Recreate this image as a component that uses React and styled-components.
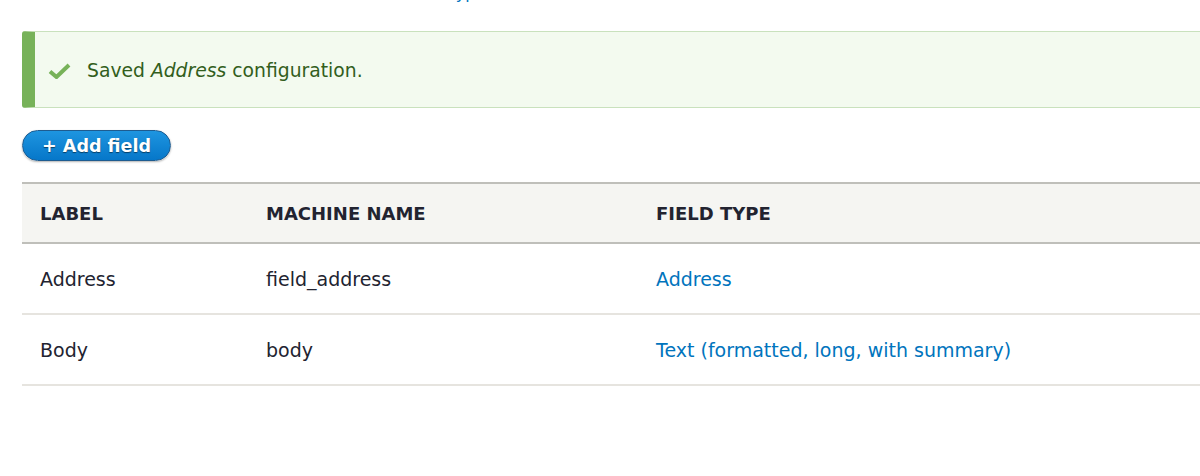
import React from 'react';
import styled, { createGlobalStyle } from 'styled-components';

const GlobalStyle = createGlobalStyle`
  html, body {
    margin: 0;
    padding: 0;
    background: #fff;
    overflow: hidden;
  }
  body {
    font-family: "DejaVu Sans", "Liberation Sans", sans-serif;
    color: #222330;
  }
`;

const Page = styled.div`
  padding-left: 22px;
  margin-right: -40px;
  padding-top: 1px;
`;

const Breadcrumb = styled.div`
  margin-top: -17px;
  height: 20px;
  font-size: 16px;
  line-height: 20px;
  color: #8a8a8a;
  white-space: nowrap;
  padding-left: 60px;

  a {
    color: #0074bd;
    text-decoration: none;
  }
`;

const Message = styled.div`
  margin-top: 27px;
  height: 77px;
  box-sizing: border-box;
  display: flex;
  align-items: center;
  gap: 16px;
  padding-left: 13px;
  padding-top: 2px;
  background: #f3faef;
  border: 1px solid #c9e1bd;
  border-left: 13px solid #77b259;
  border-radius: 3px;
  color: #325e1c;
  font-size: 18.75px;
`;

const Check = styled.svg`
  width: 23px;
  height: 16px;
  flex: none;
`;

const AddButton = styled.button`
  margin-top: 22px;
  height: 31px;
  width: 149px;
  padding: 0;
  border: 1px solid #1e5c90;
  border-radius: 16px;
  background: linear-gradient(to bottom, #1e95e0, #0677c9);
  color: #fff;
  font-family: "DejaVu Sans", sans-serif;
  font-weight: bold;
  font-size: 17.5px;
  text-shadow: 0 1px 1px rgba(0, 0, 0, 0.5);
  box-shadow: 0 1px 2px rgba(0, 0, 0, 0.3);
  display: flex;
  align-items: center;
  justify-content: center;
`;

const Table = styled.table`
  margin-top: 21px;
  width: 100%;
  border-collapse: collapse;
  table-layout: fixed;
`;

const HeadCell = styled.th`
  background: #f5f5f2;
  border-top: 2px solid #bfbfba;
  border-bottom: 2px solid #bfbfba;
  height: 58px;
  padding: 0 0 0 18px;
  text-align: left;
  text-transform: uppercase;
  font-size: 18px;
  font-weight: bold;
  color: #222330;
  width: ${(p) => p.$w || 'auto'};
`;

const Row = styled.tr`
  border-bottom: 2px solid #e6e4df;
`;

const Cell = styled.td`
  height: 69px;
  padding: 0 0 0 18px;
  font-size: 19px;
  color: #222330;
  white-space: nowrap;
`;

const TypeLink = styled.a`
  color: #0074bd;
  text-decoration: none;
`;

const fields = [
  { label: 'Address', machine: 'field_address', type: 'Address' },
  { label: 'Body', machine: 'body', type: 'Text (formatted, long, with summary)' },
];

export default function App() {
  return (
    <Page>
      <GlobalStyle />
      <Breadcrumb>
        <a href="#">Home</a> » <a href="#">Administration</a> » <a href="#">Structure</a> »{' '}
        <a href="#">Content types</a> » <a href="#">Restaurant</a>
      </Breadcrumb>
      <Message>
        <Check viewBox="0 0 23 16">
          <path d="M2 8.5 L8.5 14 L21 2" fill="none" stroke="#77b259" strokeWidth="4" />
        </Check>
        <span>
          Saved <em>Address</em> configuration.
        </span>
      </Message>
      <AddButton>+ Add field</AddButton>
      <Table>
        <thead>
          <tr>
            <HeadCell $w="208px">Label</HeadCell>
            <HeadCell $w="372px">Machine name</HeadCell>
            <HeadCell>Field type</HeadCell>
          </tr>
        </thead>
        <tbody>
          {fields.map((f) => (
            <Row key={f.machine}>
              <Cell>{f.label}</Cell>
              <Cell>{f.machine}</Cell>
              <Cell>
                <TypeLink href="#">{f.type}</TypeLink>
              </Cell>
            </Row>
          ))}
        </tbody>
      </Table>
    </Page>
  );
}
